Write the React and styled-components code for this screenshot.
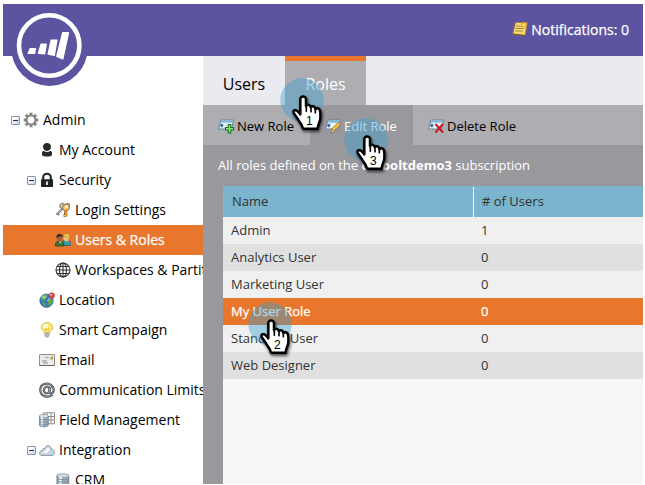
import React from 'react';
import styled, { createGlobalStyle, css } from 'styled-components';

const GlobalStyle = createGlobalStyle`
  body { margin: 0; background: #fff; font-family: "Open Sans", "Noto Sans", sans-serif; }
  * { box-sizing: border-box; }
`;

const Page = styled.div`
  width: 645px;
  height: 485px;
  padding: 4px 2px 1px 3px;
  background: #fff;
  overflow: hidden;
`;
const Shell = styled.div`
  position: relative;
  display: flex;
  flex-direction: column;
  height: 480px;
`;
const Header = styled.header`
  display: flex;
  flex: none;
  height: 52px;
  padding: 0 14px 2px 0;
  align-items: center;
  justify-content: flex-end;
  background: #5c54a0;
  color: #fff;
`;
const Notifications = styled.div`
  display: flex;
  align-items: center;
  gap: 3px;
  font-size: 14px;
  -webkit-text-stroke: .25px #fff;
  white-space: nowrap;
`;
const LogoBadge = styled.div`
  position: absolute;
  left: 7px;
  top: 4px;
  width: 79px;
  height: 79px;
  svg { display: block; }
`;
const Body = styled.div`
  display: flex;
  flex: 1;
  min-height: 0;
`;
const Sidebar = styled.nav`
  width: 200px;
  flex: none;
  padding-top: 49px;
  overflow: hidden;
  background: #fff;
`;
const TreeRow = styled.div`
  display: flex;
  align-items: center;
  height: 30px;
  padding-left: ${p => 4 + p.$level * 16}px;
  background: ${p => (p.$selected ? '#e8762c' : 'transparent')};
  color: ${p => (p.$selected ? '#fff' : '#000')};
  ${p => p.$selected && css`-webkit-text-stroke: .25px #fff;`}
`;
const Slot = styled.span`
  display: flex;
  width: 16px;
  height: 16px;
  flex: none;
  align-items: center;
  justify-content: center;
`;
const TreeLabel = styled.span`
  margin-left: 4px;
  font-size: 14px;
  line-height: 30px;
  white-space: nowrap;
`;
const Toggle = styled.span`
  display: flex;
  width: 9px;
  height: 9px;
  align-items: center;
  justify-content: center;
  border: 1px solid #8297b8;
  border-radius: 1px;
  background: linear-gradient(135deg, #fff 30%, #bccbe2);
  &::after { content: ''; width: 5px; height: 1px; background: #203050; }
`;
const Main = styled.main`
  display: flex;
  flex: 1;
  flex-direction: column;
  min-width: 0;
  background: #99989d;
`;
const TabBar = styled.div`
  display: flex;
  height: 49px;
  flex: none;
  background: #ebeaf0;
`;
const Tab = styled.div`
  width: ${p => p.$width}px;
  padding-top: ${p => (p.$active ? 0 : 5)}px;
  border-top: ${p => (p.$active ? '5px solid #e8762c' : 'none')};
  background: ${p => (p.$active ? '#aeadb2' : 'transparent')};
  color: ${p => (p.$active ? '#fff' : '#000')};
  font-size: 16px;
  line-height: 46px;
  text-align: center;
`;
const Toolbar = styled.div`
  display: flex;
  height: 40px;
  flex: none;
  background: #aeadb2;
`;
const ToolButton = styled.div`
  display: flex;
  align-items: center;
  gap: 3px;
  width: ${p => p.$width}px;
  padding: 2px 0 0 15px;
  font-size: 13px;
  white-space: nowrap;
  ${p => p.$active && css`background: #99989d; color: #fff;`}
`;
const Intro = styled.p`
  margin: 0;
  height: 41px;
  flex: none;
  padding-left: 15px;
  color: #fff;
  font-size: 13px;
  line-height: 40px;
  white-space: nowrap;
`;
const Table = styled.div`
  flex: 1;
  margin-left: 20px;
  background: #f6f6f6;
  color: #333;
  font-size: 13px;
`;
const TableHead = styled.div`
  display: grid;
  grid-template-columns: 250px 1fr;
  height: 31px;
  background: #7ab4cd;
  line-height: 31px;
`;
const HeadCell = styled.div`
  margin-top: ${p => (p.$divided ? 1 : 0)}px;
  padding-left: ${p => (p.$divided ? 8 : 9)}px;
  border-left: ${p => (p.$divided ? '1px solid #fff' : 'none')};
  line-height: ${p => (p.$divided ? 29 : 31)}px;
`;
const TableRow = styled.div`
  display: grid;
  grid-template-columns: 250px 1fr;
  height: 27px;
  padding-left: 8px;
  line-height: 27px;
  background: ${p => (p.$selected ? '#e8762c' : p.$alt ? '#e0e0e0' : '#f0f0f0')};
  color: ${p => (p.$selected ? '#fff' : '#333')};
  ${p => p.$selected && css`-webkit-text-stroke: .25px #fff;`}
`;
const PointerMark = styled.div`
  position: absolute;
  left: ${p => p.$x - 25}px;
  top: ${p => p.$y - 26}px;
  width: 50px;
  height: 60px;
  svg { display: block; }
`;

const Icon = ({ children }) => (
  <svg width="16" height="16" viewBox="0 0 16 16">{children}</svg>
);

const Gear = () => (
  <Icon>
    <g stroke="#858585" strokeWidth="3">
      {[0, 45, 90, 135].map(a => <path key={a} d="M8 .7v2.800M8 12.500v2.800" transform={`rotate(${a} 8 8)`} />)}
    </g>
    <circle cx="8" cy="8" r="4.400" fill="none" stroke="#858585" strokeWidth="2" />
  </Icon>
);
const Person = () => (
  <Icon>
    <path d="M8 1c2.4 0 4 1.5 4 3.8S10.300 9 8 9 4 7.200 4 4.800 5.600 1 8 1z" fill="#292929" />
    <path d="M3 10.500c0-1 .7-1.600 1.800-1.600 1.800 1.500 4.600 1.500 6.400 0 1.100 0 1.800.6 1.800 1.600v2.500c-1 2-9 2-10 0z" fill="#292929" />
  </Icon>
);
const Lock = () => (
  <Icon>
    <path d="M4.200 8V5.500a3.800 3.800 0 0 1 7.600 0V8" fill="none" stroke="#222" strokeWidth="2.100" />
    <rect x="2" y="7.300" width="12" height="7.700" rx=".6" fill="#222" />
    <path d="M7 9.500h2v3.500H7z" fill="#ddd" />
  </Icon>
);
const Keys = () => (
  <Icon>
    <path d="M8.500 6L1.500 12.500M2.500 11.500l1.500 1.500" stroke="#707070" strokeWidth="2" />
    <path d="M8.500 6L2 12" stroke="#ddd" strokeWidth=".8" />
    <circle cx="7.500" cy="4" r="2.700" fill="#c9c9c9" stroke="#777" />
    <path d="M11 6.500v8M11 13.500H8.500M11 11H9" stroke="#9c641d" strokeWidth="2.700" />
    <path d="M11 6.500v7.500M10.500 13.500H9" stroke="#f5bd52" strokeWidth="1.200" />
    <circle cx="11" cy="5.500" r="3.400" fill="#f3c66d" stroke="#a66c26" />
    <circle cx="11.500" cy="4.500" r="1.300" fill="#fff" />
    <path d="M10 3.500Q11 .5 14.500 1.500V5" fill="none" stroke="#888" />
  </Icon>
);
const People = () => (
  <Icon>
    <path d="M7 13.500c0-5 1.500-5.500 3.500-5.500h2c2 0 3 2 3 5.500z" fill="#3a98a9" stroke="#176274" strokeWidth=".7" />
    <ellipse cx="11.500" cy="5.600" rx="3.200" ry="3.800" fill="#f0bd75" />
    <path d="M8 5c-.4-4 6.800-4.800 7.200.3l-1 2.200c-.2-3-2-3-4-3.500z" fill="#f8d64e" stroke="#99681c" strokeWidth=".6" />
    <path d="M.5 14c0-4 1-5 4-5s4.500 1 4.500 5z" fill="#397834" stroke="#173f1c" strokeWidth=".7" />
    <ellipse cx="4.600" cy="6" rx="3" ry="3.600" fill="#a46439" />
    <path d="M1.500 6C.5 1 8 .8 8 5L6.500 4 3 5z" fill="#302920" />
    <path d="M4 9.500l1.500 2 1-2" fill="#f0e5d2" />
  </Icon>
);
const Grid = () => (
  <Icon>
    <g fill="none" stroke="#333" strokeWidth="1.100">
      <circle cx="8" cy="8" r="7" /><ellipse cx="8" cy="8" rx="3.500" ry="7" />
      <path d="M8 1v14M1 8h14M2 4.500h12M2 11.500h12" />
    </g>
  </Icon>
);
const Globe = () => (
  <Icon>
    <circle cx="7.500" cy="8.700" r="6.700" fill="#387cbd" stroke="#315b88" strokeWidth=".7" />
    <path d="M1.500 6.500C3 3 6 2 8 2.500L9 4 7 6 6 8 4 8.500 3 7zM8.500 8l4-1 1.500 2-2 4-2 1.500-.5-3zM3 10l3 1 .5 3.500-2-1z" fill="#64a846" />
    <ellipse cx="5" cy="5" rx="2.500" ry="1.500" fill="#d5eaef" opacity=".5" />
    <path d="M12 5l-3.500 4" stroke="#ddd" />
    <circle cx="12.800" cy="3.500" r="2.800" fill="#dd4941" stroke="#b52f2c" strokeWidth=".5" />
    <circle cx="12" cy="2.700" r="1" fill="#ffb4a9" />
  </Icon>
);
const Bulb = () => (
  <Icon>
    <path d="M5.500 11C5 9 2.300 8 2.300 5.300 2.300 2.500 5 .5 8 .5s5.700 2 5.700 4.800C13.700 8 11 9 10.500 11z" fill="#ffe978" stroke="#d8b34c" strokeWidth=".9" />
    <ellipse cx="6.500" cy="4" rx="2.700" ry="2.200" fill="#fffbd0" />
    <path d="M7 10.500L6.500 6.500l1.500 1 1.500-1-.5 4" fill="none" stroke="#dba934" strokeWidth=".6" />
    <path d="M5.500 11h5v3L9 15.500H7L5.500 14z" fill="#999da1" /><path d="M6 12.500h4M6 14h4" stroke="#e1e1e1" strokeWidth=".6" />
  </Icon>
);
const Mail = () => (
  <Icon>
    <rect x=".5" y="2.500" width="15" height="11" rx=".5" fill="#ecebe7" stroke="#8d8d8b" />
    <path d="M.5 13.500h15" stroke="#666" /><path d="M3 9h5M4 11h5" stroke="#777" strokeWidth=".8" />
    <path d="M6 5.500q1-1 2 0t2 0" fill="none" stroke="#777" strokeWidth=".7" />
    <path d="M11.500 4.500h2.500v3h-2.500z" fill="#b0a443" />
  </Icon>
);
const At = () => (
  <Icon>
    <g fill="none" stroke="#4c5156" strokeWidth="2.200">
      <path d="M13.500 12.500C9 17 1 14 1.300 7.500S9 .3 12.500 3.300s2.600 8-.6 8-1.400-2-.4-6.300" />
      <ellipse cx="7.800" cy="8" rx="2.900" ry="3.300" transform="rotate(18 7.800 8)" />
    </g>
    <g fill="none" stroke="#c5ccd1" strokeWidth=".5">
      <path d="M13.500 12.500C9 17 1 14 1.300 7.500S9 .3 12.500 3.300s2.600 8-.6 8-1.400-2-.4-6.300" />
      <ellipse cx="7.800" cy="8" rx="2.900" ry="3.300" transform="rotate(18 7.800 8)" />
    </g>
  </Icon>
);
const Cylinder = () => (
  <g>
    <path d="M1 3.500C1 1.500 10.500 1.500 10.500 3.500v10c0 2-9.500 2-9.500 0z" fill="#9cabb6" stroke="#65737e" strokeWidth=".8" />
    <path d="M2.500 4.500v9.500h2.500V5z" fill="#e8f0f4" />
    <path d="M1 6.500c1 1.500 8.500 1.500 9.500 0M1 9c1 1.500 8.500 1.500 9.500 0M1 11.500c1 1.500 8.500 1.500 9.500 0" fill="none" stroke="#778895" strokeWidth=".8" />
    <ellipse cx="5.750" cy="3.500" rx="4.500" ry="1.300" fill="#d5dfe6" />
  </g>
);
const Field = () => (
  <Icon>
    <path d="M4.500.8h11v11h-11zM8 .8v11M12 .8v11M4.500 4.500h11M4.500 8h11" fill="#fff" stroke="#8b8e91" />
    <g transform="translate(-.5 .8) scale(.93)"><Cylinder /></g>
  </Icon>
);
const Database = () => <Icon><g transform="translate(.8) scale(1.230 1)"><Cylinder /></g></Icon>;
const Cloud = () => (
  <Icon>
    <path d="M3 13.500C-.5 13.500-.3 9 3 9c0-2 1.500-3 3-2.500C7 2 12 3 12 7c4 0 4.800 6.500 1 6.500z" fill="#c5d4df" stroke="#778b9a" strokeWidth=".8" />
    <path d="M3 11c1.500-2 3-1 4-3 1-3 3-3 4-.5L8 11z" fill="#f5fafc" />
  </Icon>
);
const Note = () => (
  <Icon>
    <path d="M3.500 1.500h11.800L13 14.500.8 13z" fill="#f7dc73" stroke="#a47b28" strokeWidth=".9" />
    <path d="M.8 13L13 14.500" stroke="#765b24" /><path d="M4 5h6M3.500 7.500h8M3 10h8" stroke="#a18444" />
    <circle cx="12" cy="4" r="2.800" fill="#f5ad45" /><circle cx="12" cy="4" r="1.200" fill="#ffe2a0" />
  </Icon>
);
const RoleIcon = ({ kind }) => (
  <Icon>
    <path d="M3 2h12.500l-2 9H.5z" fill="#d7edf8" stroke="#597f9b" strokeWidth=".9" />
    <path d="M3.500 2.500H15l-.4 2H3z" fill="#80b6d3" /><path d="M6 6.500h5M5 8.500h4" stroke="#fff" />
    <ellipse cx="3.800" cy="7.500" rx="1.500" ry="1.800" fill="#446b87" />
    {kind === 'new' && <><path d="M11.500 6v9.500M7 10.800h9" stroke="#167522" strokeWidth="3.600" /><path d="M11.500 7v7.500M8 10.800h7" stroke="#8be278" strokeWidth="1.500" /></>}
    {kind === 'edit' && <><path d="M6 15l1.200-4.500 6.500-6.500 2 2.500-6.500 6.500z" fill="#f6bd45" stroke="#9a651d" strokeWidth=".8" /><path d="M6 15l1-3.500 2.200 1.800z" fill="#fff1cf" stroke="#555" strokeWidth=".5" /></>}
    {kind === 'delete' && <path d="M7.500 6l7.500 8.500M15 6l-7.500 8.500" stroke="#c71924" strokeWidth="2" />}
  </Icon>
);

const Logo = () => (
  <LogoBadge>
    <svg width="79" height="79" viewBox="10 8 79 79">
      <circle cx="49.500" cy="47.500" r="38.400" fill="#5c54a0" />
      <circle cx="49.200" cy="45.500" r="30.200" fill="none" stroke="#fff" strokeWidth="4.600" />
      <g fill="#fff" stroke="#fff" strokeLinejoin="round" strokeWidth="1.500">
        <path d="M30.200 48.800h5.200l-.8 4.400h-6.400zM41.200 44.200h5l-1.700 9.600-6-.5zM51.200 40.300h5.600l-2.600 15-6-1.200zM62.800 32.800h5.600l-5.600 25.900-6-2.300z" />
      </g>
    </svg>
  </LogoBadge>
);

const Pointer = ({ x, y, number }) => (
  <PointerMark $x={x} $y={y}>
    <svg width="50" height="60" viewBox="-75 -78 150 180">
      <defs>
        <filter id={`shadow${number}`} x="-40%" y="-40%" width="180%" height="180%">
          <feDropShadow dx="3" dy="6" stdDeviation="4" floodOpacity=".65" />
        </filter>
      </defs>
      <circle r="65" fill="rgba(55,160,210,.42)" />
      <path filter={`url(#shadow${number})`} d="M-5-2C-6-13 12-14 12-2V18C15 12 25 14 26 21C31 16 39 19 40 27C48 21 55 28 55 38V55C55 65 47 73 47 86H3C2 74-8 67-13 56L-25 39C-29 30-18 27-11 36L-5 43z" fill="#fff" stroke="#050505" strokeWidth="7.500" strokeLinejoin="round" />
      <path d="M13 16V34M27 20V35M40 27V38" stroke="#050505" strokeWidth="5" strokeLinecap="round" />
      <text x="22" y="74" textAnchor="middle" fontFamily="Liberation Sans, Arial, sans-serif" fontSize="36" fill="#000">{number}</text>
    </svg>
  </PointerMark>
);

const tree = [
  { label: 'Admin', level: 0, icon: <Gear />, open: true },
  { label: 'My Account', level: 1, icon: <Person /> },
  { label: 'Security', level: 1, icon: <Lock />, open: true },
  { label: 'Login Settings', level: 2, icon: <Keys /> },
  { label: 'Users & Roles', level: 2, icon: <People />, selected: true },
  { label: 'Workspaces & Partitions', level: 2, icon: <Grid /> },
  { label: 'Location', level: 1, icon: <Globe /> },
  { label: 'Smart Campaign', level: 1, icon: <Bulb /> },
  { label: 'Email', level: 1, icon: <Mail /> },
  { label: 'Communication Limits', level: 1, icon: <At /> },
  { label: 'Field Management', level: 1, icon: <Field /> },
  { label: 'Integration', level: 1, icon: <Cloud />, open: true },
  { label: 'CRM', level: 2, icon: <Database /> },
];
const roles = [['Admin', 1], ['Analytics User', 0], ['Marketing User', 0], ['My User Role', 0], ['Standard User', 0], ['Web Designer', 0]];

export default function App() {
  return (
    <Page>
      <GlobalStyle />
      <Shell>
        <Header><Notifications><Note />Notifications: 0</Notifications></Header>
        <Body>
          <Sidebar>
            {tree.map(n => (
              <TreeRow key={n.label} $level={n.level} $selected={n.selected}>
                <Slot>{n.open && <Toggle />}</Slot>
                <Slot>{n.icon}</Slot>
                <TreeLabel>{n.label}</TreeLabel>
              </TreeRow>
            ))}
          </Sidebar>
          <Main>
            <TabBar><Tab $width={82}>Users</Tab><Tab $width={81} $active>Roles</Tab></TabBar>
            <Toolbar>
              <ToolButton $width={107}><RoleIcon kind="new" />New Role</ToolButton>
              <ToolButton $width={103} $active><RoleIcon kind="edit" />Edit Role</ToolButton>
              <ToolButton $width={230}><RoleIcon kind="delete" />Delete Role</ToolButton>
            </Toolbar>
            <Intro>All roles defined on the <b>carboltdemo3</b> subscription</Intro>
            <Table>
              <TableHead><HeadCell>Name</HeadCell><HeadCell $divided># of Users</HeadCell></TableHead>
              {roles.map(([name, count], i) => (
                <TableRow key={name} $alt={i % 2 === 1} $selected={name === 'My User Role'}>
                  <span>{name}</span><span>{count}</span>
                </TableRow>
              ))}
            </Table>
          </Main>
        </Body>
        <Logo />
        <Pointer x={298.7} y={96} number={1} />
        <Pointer x={266.7} y={319.5} number={2} />
        <Pointer x={362.7} y={135.5} number={3} />
      </Shell>
    </Page>
  );
}
